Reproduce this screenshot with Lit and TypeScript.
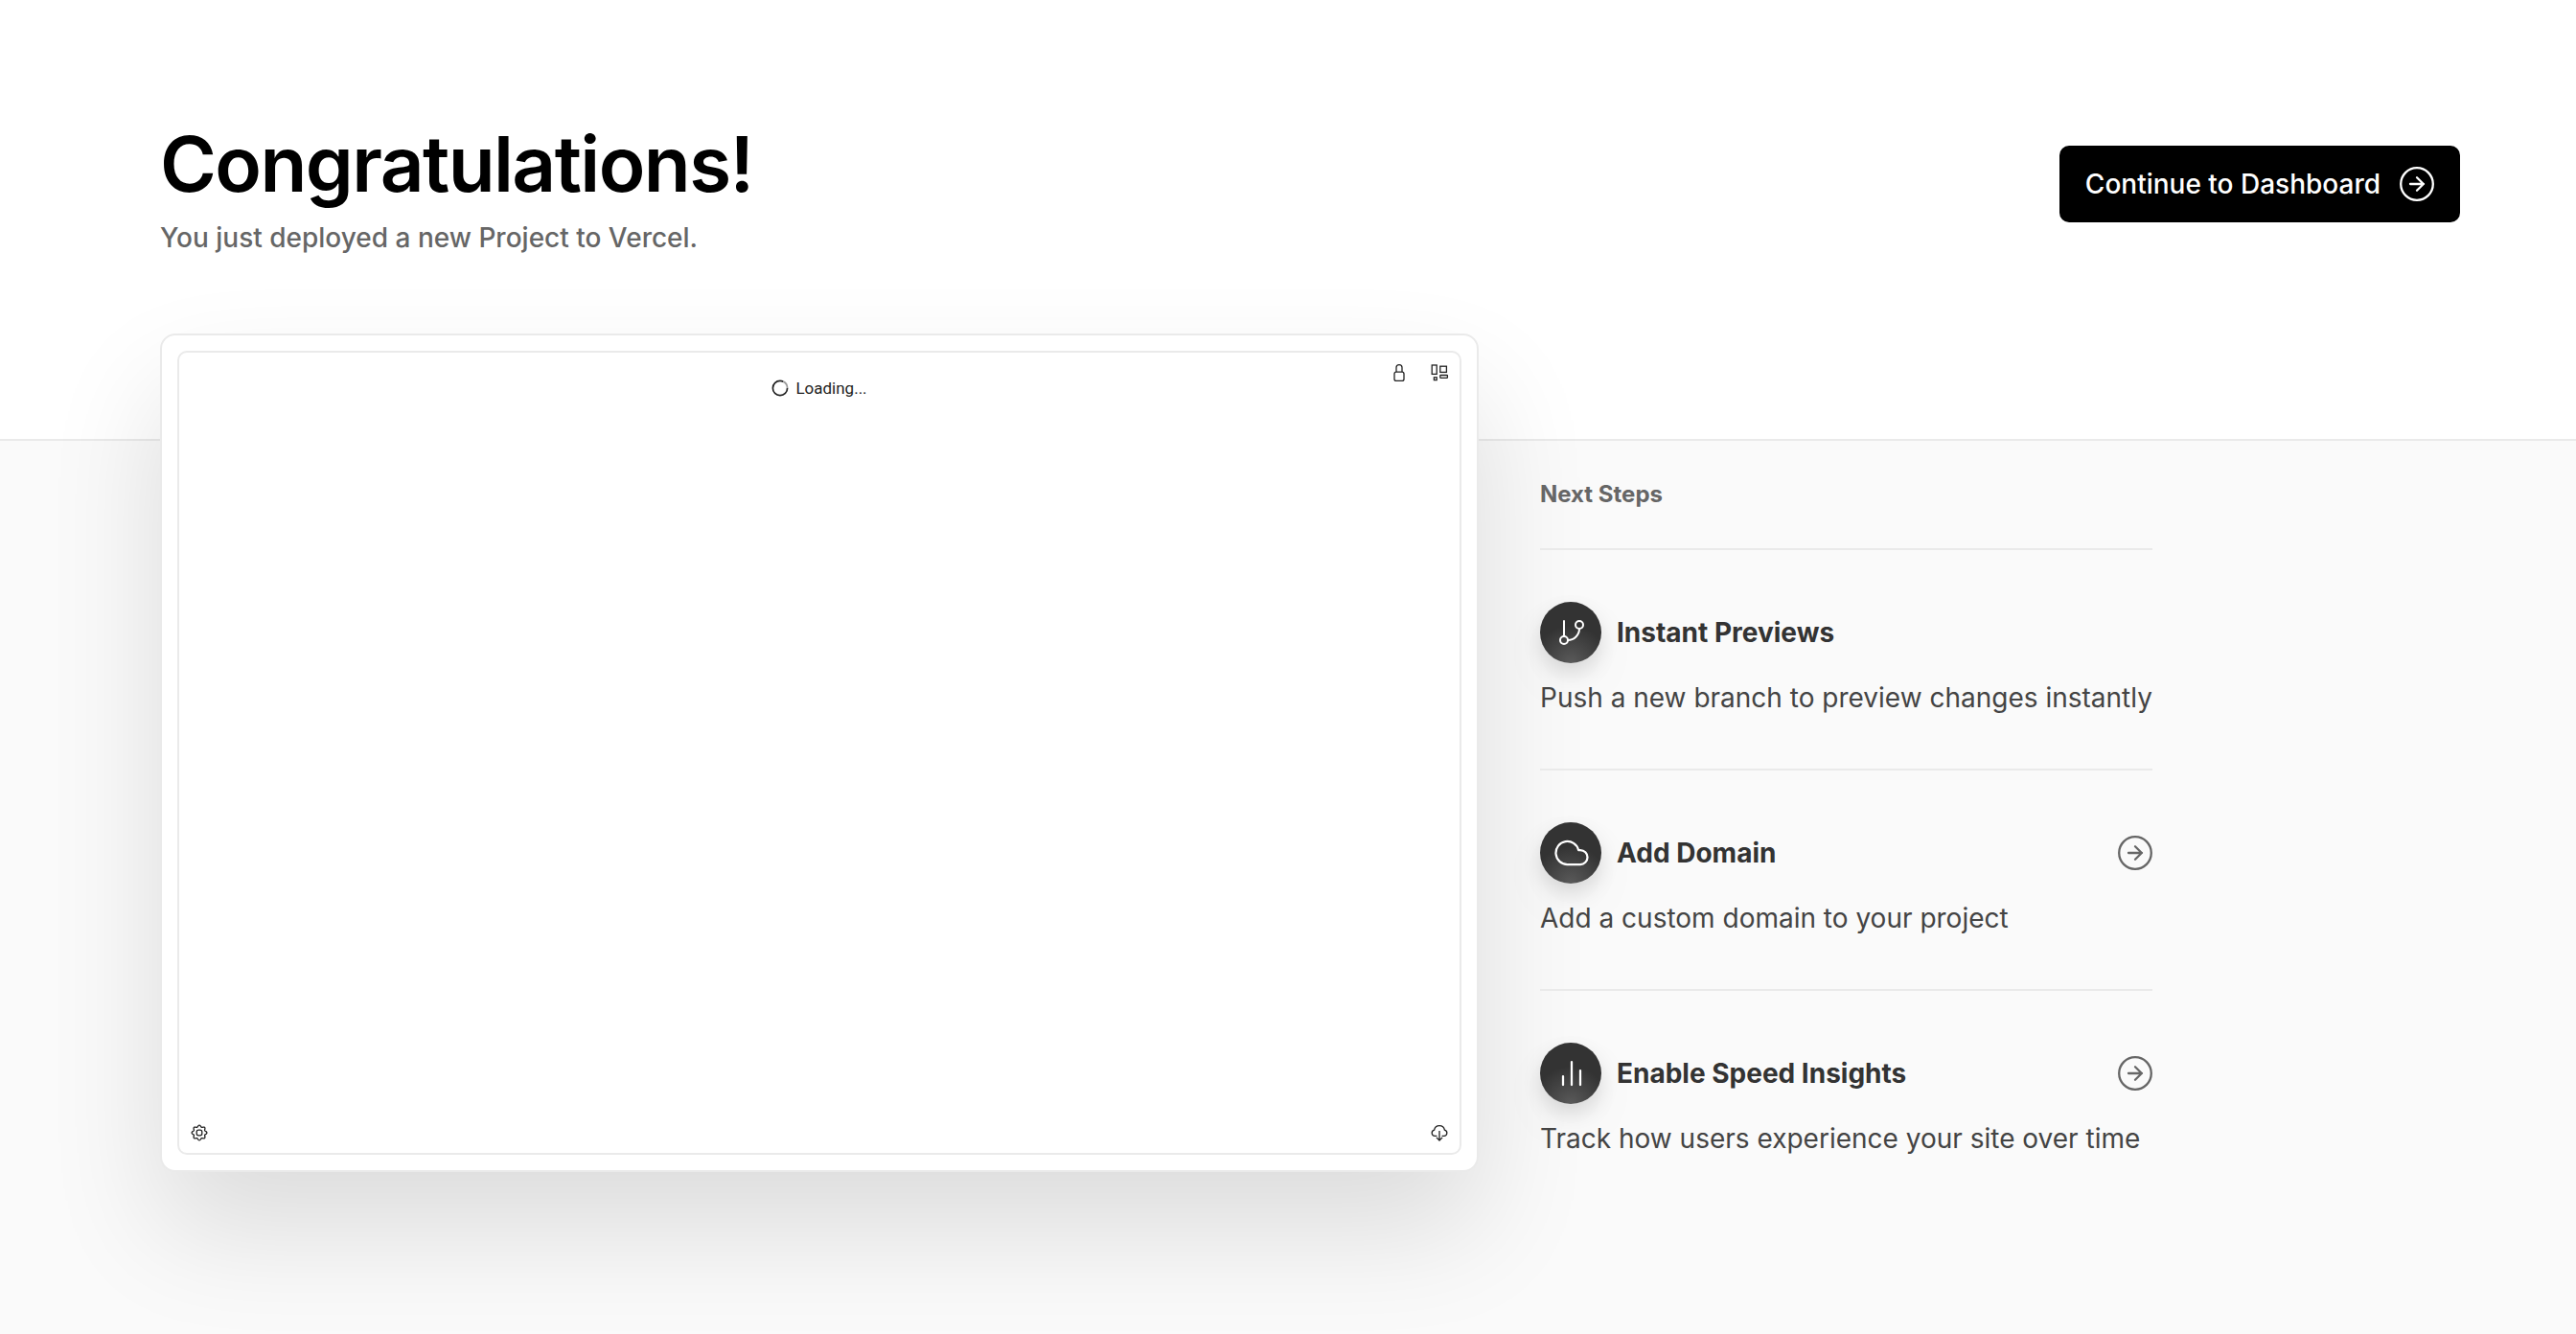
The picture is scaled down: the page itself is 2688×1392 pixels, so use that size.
import { LitElement, html, css, svg } from "lit";
import { customElement } from "lit/decorators.js";

const branch = svg`<line x1="6" y1="3" x2="6" y2="15"/><circle cx="18" cy="6" r="3"/><circle cx="6" cy="18" r="3"/><path d="M18 9a9 9 0 0 1-9 9"/>`;
const cloud = svg`<path d="M18 10h-1.26A8 8 0 1 0 9 20h9a5 5 0 0 0 0-10z"/>`;
const chart = svg`<path d="M12 20V4M6 20v-6M18 20V10"/>`;

const STEPS = [
  { title: "Instant Previews", text: "Push a new branch to preview changes instantly", icon: branch, size: "small", link: false },
  { title: "Add Domain", text: "Add a custom domain to your project", icon: cloud, size: "large", link: true },
  { title: "Enable Speed Insights", text: "Track how users experience your site over time", icon: chart, size: "large", link: true },
];

// Outline of an eight-lobed cog centred in a 20x20 box.
const cogPath = (() => {
  const points: string[] = [];
  for (let i = 0; i <= 96; i++) {
    const a = (i / 96) * Math.PI * 2;
    const r = 7 + 0.9 * Math.cos(a * 8);
    points.push(`${(10 + r * Math.cos(a)).toFixed(2)} ${(10 + r * Math.sin(a)).toFixed(2)}`);
  }
  return `M${points.join("L")}Z`;
})();

const lock = svg`<rect x="5" y="9.2" width="10" height="9.2" rx="2"/><path d="M7 9V4.6a3 3 0 0 1 6 0V9"/>`;
const blocks = svg`<rect x="2.2" y="2" width="5" height="9.4"/><rect x="10.8" y="3.2" width="6.6" height="6.2"/><rect x="4.4" y="14.8" width="2.8" height="2.8"/><rect x="10.8" y="12.5" width="7.6" height="2.8" rx="0.6"/>`;
const cog = svg`<path d=${cogPath}/><rect x="7.2" y="7.2" width="5.6" height="5.6" rx="2"/>`;
const download = svg`<path d="M7.4 13.4H5.2a3.2 3.2 0 0 1-.6-6.3 5.5 5.5 0 0 1 10.8 0 3.2 3.2 0 0 1-.6 6.3h-2.2"/><path d="M10 8v9.8M6.9 14.9l3.1 3.1 3.1-3.1"/>`;

const tool = (label: string, icon: unknown) => html`<button class="tool" type="button" aria-label=${label}>
  <svg viewBox="0 0 20 20" fill="none" stroke="currentColor" stroke-width="1.3" aria-hidden="true">${icon}</svg>
</button>`;

const arrow = html`<svg class="arrow" viewBox="0 0 36 36" fill="none" stroke="currentColor" stroke-width="2.3" stroke-linecap="round" stroke-linejoin="round" aria-hidden="true">
  <circle cx="18" cy="18" r="16.8"/>
  <path d="M11 18h14M18 11.3l6.8 6.7-6.8 6.7"/>
</svg>`;

@customElement("app-root")
export class AppRoot extends LitElement {
  static styles = css`
    :host { display: block; min-height: 100vh; background: #fafafa; font-family: Inter, "Liberation Sans", sans-serif; color: #000; }
    * { box-sizing: border-box; }
    h1, h2, h3, p, ol { margin: 0; padding: 0; }
    .header { display: flex; justify-content: space-between; align-items: flex-start; padding: 127px 121px 190px 167px; background: #fff; border-bottom: 2px solid #eaeaea; }
    .header h1 { font-size: 80px; line-height: 88px; font-weight: 600; letter-spacing: -0.02em; }
    .lead { margin-top: 13px; font-size: 28px; line-height: 40px; font-weight: 500; color: #666; }
    .cta { display: flex; align-items: center; gap: 20px; height: 80px; margin-top: 25px; padding: 0 27px; border: 0; border-radius: 10px; background: #000; color: #fff; font: 500 28px/40px Inter, "Liberation Sans", sans-serif; cursor: pointer; }
    .arrow { display: block; width: 36px; height: 36px; }
    .main { display: grid; grid-template-columns: minmax(0, 1376fr) minmax(0, 1017fr); gap: 64px; padding: 0 64px 160px 167px; }
    .card { position: relative; display: grid; min-height: 875px; margin-top: -112px; padding: 16px; background: #fff; border: 2px solid #eaeaea; border-radius: 16px; box-shadow: 0 60px 120px rgba(0, 0, 0, 0.12); align-self: start; }
    .preview { display: flex; flex-direction: column; justify-content: space-between; padding: 11px; border: 2px solid #eaeaea; border-radius: 10px; }
    .bar { display: grid; grid-template-columns: 1fr auto 1fr; align-items: start; }
    .tools { display: flex; grid-column: 3; justify-content: flex-end; gap: 22px; }
    .bottom { display: flex; justify-content: space-between; }
    .tool { display: block; padding: 0; border: 0; background: none; color: #222; cursor: pointer; }
    .tool svg { display: block; width: 20px; height: 20px; }
    .loading { display: flex; grid-column: 2; align-items: center; gap: 7px; padding-top: 16px; font-family: Roboto, "Liberation Sans", sans-serif; font-size: 17px; line-height: 20px; color: #222; }
    .loading svg { width: 18px; height: 18px; }
    .steps { position: relative; justify-self: start; }
    .steps h2 { padding: 42px 0; font-size: 24px; line-height: 28px; font-weight: 700; color: #666; }
    .list { list-style: none; }
    .step { min-height: 230px; padding-top: 54px; border-top: 2px solid #eaeaea; }
    .top { display: flex; align-items: center; gap: 16px; height: 64px; }
    .top h3 { flex: 1; font-size: 28px; line-height: 40px; font-weight: 700; color: #333; }
    .badge { display: grid; place-items: center; width: 64px; height: 64px; padding-left: 2px; border-radius: 50%; color: #fff; background: radial-gradient(circle at 50% 100%, #5a5a5a 0, #333 55%); box-shadow: 0 10px 20px rgba(0, 0, 0, 0.12), 0 20px 60px rgba(0, 0, 0, 0.04); }
    .large { width: 36px; height: 36px; }
    .small { width: 32px; height: 32px; }
    .go { color: #666; }
    .step p { margin-top: 16px; font-size: 28px; line-height: 40px; color: #444; }
  `;

  render() {
    return html`
      <header class="header">
        <div>
          <h1>Congratulations!</h1>
          <p class="lead">You just deployed a new Project to Vercel.</p>
        </div>
        <button class="cta" type="button">Continue to Dashboard ${arrow}</button>
      </header>
      <main class="main">
        <section class="card" aria-label="Preview">
          <div class="preview">
            <div class="bar">
              <div class="loading">
                <svg viewBox="0 0 18 18" fill="none" stroke="#222" stroke-width="1.7" aria-hidden="true">
                  <circle cx="9" cy="9" r="7.6" pathLength="100" stroke-dasharray="82 18"/>
                  <circle cx="9" cy="9" r="7.6" pathLength="100" stroke="#999" stroke-dasharray="0 82 18 0"/>
                </svg>
                <span>Loading...</span>
              </div>
              <div class="tools">${tool("Lock", lock)}${tool("Layout", blocks)}</div>
            </div>
            <div class="bottom">${tool("Settings", cog)}${tool("Download", download)}</div>
          </div>
        </section>
        <section class="steps">
          <h2>Next Steps</h2>
          <ol class="list">
            ${STEPS.map(s => html`<li class="step">
              <div class="top">
                <span class="badge"><svg class=${s.size} viewBox="0 0 24 24" fill="none" stroke="currentColor" stroke-width="1.5" stroke-linecap="round" stroke-linejoin="round" aria-hidden="true">${s.icon}</svg></span>
                <h3>${s.title}</h3>
                ${s.link ? html`<a class="go" href="#" aria-label=${s.title}>${arrow}</a>` : ""}
              </div>
              <p>${s.text}</p>
            </li>`)}
          </ol>
        </section>
      </main>`;
  }
}
